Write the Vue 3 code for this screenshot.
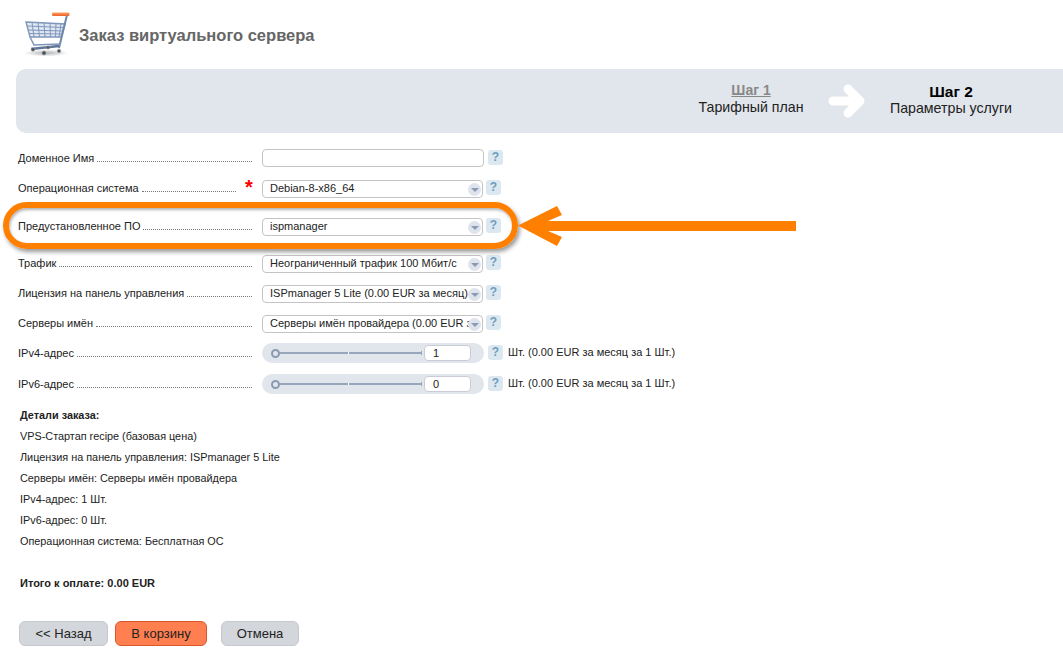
<script setup>
const steps = [
  { label: 'Доменное Имя', type: 'input', cls: 'r1' },
  { label: 'Операционная система', type: 'select', value: 'Debian-8-x86_64', req: true, cls: 'r2' },
  { label: 'Предустановленное ПО', type: 'select', value: 'ispmanager', cls: 'r3' },
  { label: 'Трафик', type: 'select', value: 'Неограниченный трафик 100 Мбит/с', cls: 'r4' },
  { label: 'Лицензия на панель управления', type: 'select', value: 'ISPmanager 5 Lite (0.00 EUR за месяц)', cls: 'r4' },
  { label: 'Серверы имён', type: 'select', value: 'Серверы имён провайдера (0.00 EUR за месяц)', cls: 'r4' },
  { label: 'IPv4-адрес', type: 'range', value: '1', cls: 'r6' },
  { label: 'IPv6-адрес', type: 'range', value: '0', cls: 'r5' },
]
const details = [
  'VPS-Стартап recipe (базовая цена)',
  'Лицензия на панель управления: ISPmanager 5 Lite',
  'Серверы имён: Серверы имён провайдера',
  'IPv4-адрес: 1 Шт.',
  'IPv6-адрес: 0 Шт.',
  'Операционная система: Бесплатная ОС',
]
</script>

<template>
  <div class="page">
    <header class="head">
      <svg class="cart" width="50" height="46" viewBox="22 12 50 46">
        <defs>
          <radialGradient id="sh"><stop offset="0" stop-color="#000" stop-opacity=".3"/><stop offset="1" stop-color="#000" stop-opacity="0"/></radialGradient>
          <linearGradient id="hd" x1="0" y1="0" x2="0" y2="1"><stop offset="0" stop-color="#ffa060"/><stop offset="1" stop-color="#e8622c"/></linearGradient>
        </defs>
        <ellipse cx="46" cy="54" rx="22" ry="3.5" fill="url(#sh)"/>
        <g fill="none" stroke="#7f97bb" stroke-width="1">
          <path d="M26 23 L65 25 L61 38 L30 38 Z" fill="#dfe7f2" stroke-width="1.4"/>
          <path d="M27 27 L64 28.5 M28 31 L63 32 M29 34.500 L62 35"/>
          <path d="M32 23.300 L34 38 M38 23.600 L39.500 38 M44 24 L45 38 M50 24.300 L50.500 38 M56 24.600 L55.500 38 M61 24.800 L59 38"/>
        </g>
        <path d="M67 16 L59 49" fill="none" stroke="#6f88ad" stroke-width="2"/>
        <path d="M30 38 L34 46 L60 45" fill="none" stroke="#7f97bb" stroke-width="1.500"/>
        <path d="M31 50 L59 47" fill="none" stroke="#5f7699" stroke-width="2.500"/>
        <rect x="52" y="13.500" width="17.500" height="3.500" rx="1.200" fill="url(#hd)"/>
        <g fill="#4a4f57" stroke="#9aa0a8" stroke-width=".6">
          <circle cx="33" cy="50.500" r="1.800"/><circle cx="44" cy="54" r="2"/><circle cx="48" cy="48.500" r="1.600"/><circle cx="59" cy="52" r="1.800"/>
        </g>
      </svg>
      <h1 class="title">Заказ виртуального сервера</h1>
    </header>

    <section class="banner">
      <div class="step s1"><a class="num link">Шаг 1</a><span>Тарифный план</span></div>
      <svg class="next" width="38" height="34" viewBox="0 0 38 34">
        <path d="M5 17 H31 M20 5 L32 17 L20 29" fill="none" stroke="#fff" stroke-width="9" stroke-linecap="round" stroke-linejoin="round"/>
      </svg>
      <div class="step s2"><b class="num">Шаг 2</b><span>Параметры услуги</span></div>
    </section>

    <form class="form" @submit.prevent>
      <div v-for="row in steps" :key="row.label" class="row" :class="[row.cls, 'kind-' + row.type]">
        <div class="label" :class="{ short: row.req }"><span>{{ row.label }}</span><i class="dots"></i></div>
        <span v-if="row.req" class="star">*</span>
        <input v-if="row.type === 'input'" class="ctl text" />
        <div v-else-if="row.type === 'select'" class="ctl sel">
          <span class="val">{{ row.value }}</span>
          <span class="drop"><i></i></span>
        </div>
        <div v-else class="ctl slider">
          <span class="track"><i class="tick"></i><i class="knob"></i></span>
          <span class="num-in">{{ row.value }}</span>
        </div>
        <span class="help">?</span>
        <span v-if="row.type === 'range'" class="note">Шт. (0.00 EUR за месяц за 1 Шт.)</span>
      </div>
    </form>

    <section class="details">
      <div class="line"><b>Детали заказа:</b></div>
      <div v-for="d in details" :key="d" class="line">{{ d }}</div>
      <div class="line total"><b>Итого к оплате: 0.00 EUR</b></div>
    </section>

    <div class="buttons">
      <button class="btn back">&lt;&lt; Назад</button>
      <button class="btn cartbtn">В корзину</button>
      <button class="btn cancel">Отмена</button>
    </div>

    <div class="oval"></div>
    <svg class="arrow" width="280" height="42" viewBox="0 0 280 42">
      <path d="M0 19.500 L39 0 L44 9 L30 15 H278 V25 H30 L44 31 L39 40 Z" fill="#ff8000"/>
    </svg>
  </div>
</template>

<style>
html, body { margin: 0; background: #fff; }
</style>

<style scoped>
.page {
  position: relative;
  width: 1063px;
  height: 665px;
  overflow: hidden;
  font-family: "Liberation Sans", Arial, sans-serif;
  font-size: 11px;
  color: #222;
}
.head { display: flex; align-items: center; height: 69px; padding-left: 22px; box-sizing: border-box; }
.cart { flex: none; margin-top: -1px; filter: blur(.25px); }
.title { margin: 2px 0 0 7px; font-size: 16.5px; font-weight: 700; color: #666; }

.banner {
  margin-left: 16px;
  height: 64px;
  background: #e1e5ec;
  border-radius: 10px 0 0 10px;
  display: flex;
  align-items: center;
  justify-content: flex-end;
  font-size: 14.2px;
}
.step { display: flex; flex-direction: column; align-items: center; line-height: 17px; color: #222; }
.step .num { font-weight: 700; font-size: 14px; }
.link { color: #888; text-decoration: underline; }
.s2 .num { color: #000; font-size: 15.5px; }
.s1 { width: 110px; margin: -5px 22px 0 0; }
.s2 { width: 124px; margin: -3px 50px 0 23px; }
.next { flex: none; }

.form { padding-left: 18px; padding-top: 15px; }
.row { display: flex; align-items: center; height: 20px; }
.r1 { margin-bottom: 10px; }
.r2 { margin-bottom: 18px; }
.r3 { margin-bottom: 17px; }
.r4 { margin-bottom: 10px; }
.r6 { margin-bottom: 11px; }
.r5 { margin-bottom: 0; }
.label { width: 234px; flex: none; display: flex; align-items: baseline; margin-right: 10px; white-space: nowrap; }
.label.short { width: 218px; margin-right: 0; }
.dots { flex: 1; border-bottom: 1px dotted #777; margin-left: 3px; }
.star { width: 26px; flex: none; color: #f00; font-size: 20px; font-weight: 700; line-height: 20px; height: 20px; position: relative; top: -1px; padding-left: 9px; box-sizing: border-box; }

.ctl { box-sizing: border-box; flex: none; }
.text { width: 222px; height: 18px; border: 1px solid #c4c4c4; border-radius: 4px; background: #fff; outline: none; padding: 0; margin-top: -1px; }
.sel {
  width: 221px;
  height: 18px;
  border: 1px solid #c4c4c4;
  border-radius: 4px;
  background: #fff;
  position: relative;
  padding-left: 7px;
  line-height: 15px;
  margin-top: 2px;
  white-space: nowrap;
}
.val { display: block; width: 200px; overflow: hidden; color: #222; }
.drop { position: absolute; right: 1px; top: 2px; width: 13px; height: 13px; border-radius: 50%; background: #dfe3ec; }
.drop i { position: absolute; left: 2.5px; top: 5px; border: 4px solid transparent; border-top: 4px solid #8a9bb5; border-bottom: 0; }
.slider {
  width: 222px;
  height: 20px;
  border-radius: 10px;
  background: #e1e5ec;
  display: flex;
  align-items: center;
  padding-left: 13px;
}
.track { position: relative; display: block; width: 147px; height: 2px; background: #98a6bb; flex: none; }
.track::after { content: ""; position: absolute; right: 0; top: -1px; width: 1px; height: 4px; background: #98a6bb; }
.knob { position: absolute; left: -4px; top: -3.5px; width: 5px; height: 5px; border: 2px solid #8a9ab2; border-radius: 50%; background: #e1e5ec; }
.tick { position: absolute; left: 73px; top: 0; width: 1px; height: 2px; background: #fff; }
.num-in {
  box-sizing: border-box;
  flex: none;
  width: 47px;
  height: 16px;
  margin-left: 2px;
  background: #fff;
  border: 1px solid #c9ccd2;
  border-radius: 4px;
  padding-left: 8px;
  line-height: 15px;
}
.help {
  flex: none;
  width: 15px;
  height: 15px;
  margin-left: 3px;
  border-radius: 3px;
  background: #dce8f0;
  color: #6f9cbc;
  font-weight: 700;
  font-size: 12px;
  line-height: 14px;
  text-align: center;
  position: relative;
  top: -1px;
}
.kind-input .help { margin-left: 4px; }
.kind-range .help { margin-left: 4px; }
.note { margin-left: 5px; position: relative; top: -1px; white-space: nowrap; }

.details { padding: 11px 0 0 20px; font-size: 10.85px; }
.line { line-height: 21px; height: 21px; }
.total { margin-top: 21px; font-size: 11px; }

.buttons { display: flex; padding: 27px 0 0 19px; }
.btn {
  box-sizing: border-box;
  height: 25px;
  border-radius: 6px;
  border: 1px solid #c5c8cd;
  background: #d3d6db;
  color: #222;
  font-family: "Liberation Sans", Arial, sans-serif;
  font-size: 13px;
  padding: 0;
}
.back { width: 89px; }
.cartbtn { width: 92px; margin-left: 7px; background: #ff7f50; border-color: #d9572c; }
.cancel { width: 78px; margin-left: 14px; }

.oval {
  position: absolute;
  left: 3px;
  top: 202px;
  width: 515px;
  height: 47px;
  box-sizing: border-box;
  border: 6px solid #ff8000;
  border-radius: 24px;
  box-shadow: 2px 3px 4px rgba(0,0,0,.4), inset 1px 2px 3px rgba(0,0,0,.3);
}
.arrow { position: absolute; left: 518px; top: 206px; }
</style>
